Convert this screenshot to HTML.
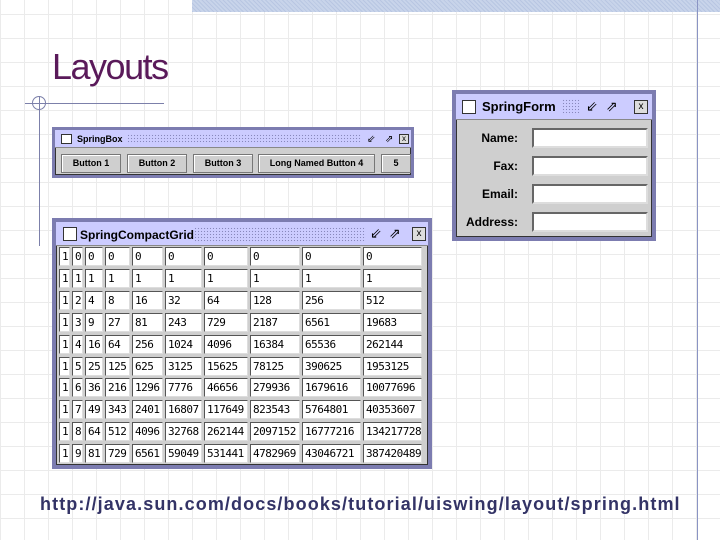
<!DOCTYPE html>
<html><head><meta charset="utf-8"><style>
*{margin:0;padding:0;box-sizing:border-box}
body{width:720px;height:540px;position:relative;overflow:hidden;background:#fff;
background-image:repeating-linear-gradient(90deg,transparent 0 23px,#ebebeb 23px 24px),repeating-linear-gradient(0deg,transparent 0 23px,#ebebeb 23px 24px);background-position:1px 2px;font-family:"Liberation Sans",sans-serif}
.a{position:absolute}
.win{position:absolute;background:#cfcfcf;border:4px solid #7c7cb0;box-shadow:inset 0 0 0 1px #333}
.tb{position:absolute;left:0;right:0;top:0;background:#ccccff;border-bottom:1px solid #888;font-weight:bold;color:#000}
.dots{position:absolute;background-image:radial-gradient(#8888bb 0.6px,transparent 0.8px);background-size:3px 3px}
.ic{position:absolute;border:1px solid #333;background:#fff}
.btn{position:absolute;top:24px;height:19px;border:1px solid #777;box-shadow:inset 1px 1px #fff;font-size:9px;font-weight:bold;text-align:center;line-height:17px;background:#cfcfcf}
.cell{position:absolute;height:19px;background:#fff;border:1px solid #555;border-right-color:#ddd;border-bottom-color:#ddd;font-size:11px;line-height:17px;padding-left:2px;overflow:hidden;white-space:nowrap;font-family:"DejaVu Sans Mono","Liberation Mono",monospace;letter-spacing:-0.5px}
.lbl{position:absolute;font-size:12px;font-weight:bold;text-align:right;width:60px}
.fld{position:absolute;left:76px;width:116px;height:20px;background:#fff;border:2px solid #666;border-right-color:#ddd;border-bottom-color:#ddd}
</style></head><body>
<div class="a" style="left:192px;top:0;width:528px;height:12px;background:#c8d4ea;background-image:repeating-linear-gradient(45deg,#b8c6e2 0 1px,transparent 1px 3px)"></div>
<div class="a" style="left:697px;top:0;width:1px;height:540px;background:#8a94c4"></div>
<div class="a" style="left:52px;top:46px;font-size:36px;color:#5a1a5a;letter-spacing:-1.5px">Layouts</div>
<div class="a" style="left:25px;top:103px;width:139px;height:1px;background:#7c80aa"></div>
<div class="a" style="left:39px;top:96px;width:1px;height:150px;background:#7c80aa"></div>
<div class="a" style="left:32px;top:96px;width:14px;height:14px;border:1px solid #7c80aa;border-radius:50%"></div>

<!-- SpringBox -->
<div class="win" style="left:52px;top:127px;width:362px;height:51px;border-width:3px">
<div class="tb" style="height:18px;font-size:9px;line-height:18px;padding-left:22px">SpringBox</div>
<div class="ic" style="left:6px;top:4px;width:11px;height:10px"></div>
<div class="dots" style="left:72px;top:4px;width:234px;height:10px"></div>
<div class="a" style="left:312px;top:4px;font-size:10px">&#8665;</div>
<div class="a" style="left:330px;top:4px;font-size:10px">&#8663;</div>
<div class="ic" style="left:344px;top:4px;width:10px;height:10px;font-size:8px;line-height:8px;text-align:center;background:#ddd">x</div>
<div class="btn" style="left:6px;width:60px">Button 1</div>
<div class="btn" style="left:72px;width:60px">Button 2</div>
<div class="btn" style="left:138px;width:60px">Button 3</div>
<div class="btn" style="left:203px;width:117px">Long Named Button 4</div>
<div class="btn" style="left:326px;width:30px">5</div>
</div>

<!-- SpringForm -->
<div class="win" style="left:452px;top:90px;width:204px;height:151px">
<div class="tb" style="height:26px;font-size:13px;line-height:26px;padding-left:26px">SpringForm</div>
<div class="ic" style="left:6px;top:6px;width:14px;height:14px"></div>
<div class="dots" style="left:106px;top:5px;width:18px;height:16px"></div>
<div class="a" style="left:130px;top:4px;font-size:14px">&#8665;</div>
<div class="a" style="left:150px;top:4px;font-size:14px">&#8663;</div>
<div class="ic" style="left:178px;top:6px;width:14px;height:14px;font-size:10px;line-height:12px;text-align:center;background:#ddd">x</div>
<div class="lbl" style="left:2px;top:37px">Name:</div><div class="fld" style="top:34px"></div>
<div class="lbl" style="left:2px;top:65px">Fax:</div><div class="fld" style="top:62px"></div>
<div class="lbl" style="left:2px;top:93px">Email:</div><div class="fld" style="top:90px"></div>
<div class="lbl" style="left:-8px;top:121px;width:70px">Address:</div><div class="fld" style="top:118px"></div>
</div>

<!-- Grid -->
<div class="win" style="left:52px;top:218px;width:380px;height:251px">
<div class="tb" style="height:24px;font-size:12px;line-height:26px;padding-left:24px">SpringCompactGrid</div>
<div class="ic" style="left:7px;top:5px;width:14px;height:14px"></div>
<div class="dots" style="left:138px;top:5px;width:172px;height:16px"></div>
<div class="a" style="left:314px;top:3px;font-size:14px">&#8665;</div>
<div class="a" style="left:333px;top:3px;font-size:14px">&#8663;</div>
<div class="ic" style="left:356px;top:5px;width:14px;height:14px;font-size:10px;line-height:12px;text-align:center;background:#ddd">x</div>
<div id="g"></div>
</div>
<div class="a" style="left:40px;top:494px;font-size:18px;font-weight:bold;color:#333366;letter-spacing:1.1px">http://java.sun.com/docs/books/tutorial/uiswing/layout/spring.html</div>
<script>
var xs=[3,16,29,49,76,109,148,194,246,307,368];
var h='';
for(var r=0;r<10;r++){var y=25+r*21.9;
for(var c=0;c<10;c++){var v;if(c==0)v='1';else v=String(Math.round(Math.pow(r,c)));
h+='<div class="cell" style="left:'+xs[c]+'px;top:'+y+'px;width:'+(xs[c+1]-xs[c]-2)+'px">'+v+'</div>';}}
document.getElementById('g').innerHTML=h;
</script>
</body></html>
